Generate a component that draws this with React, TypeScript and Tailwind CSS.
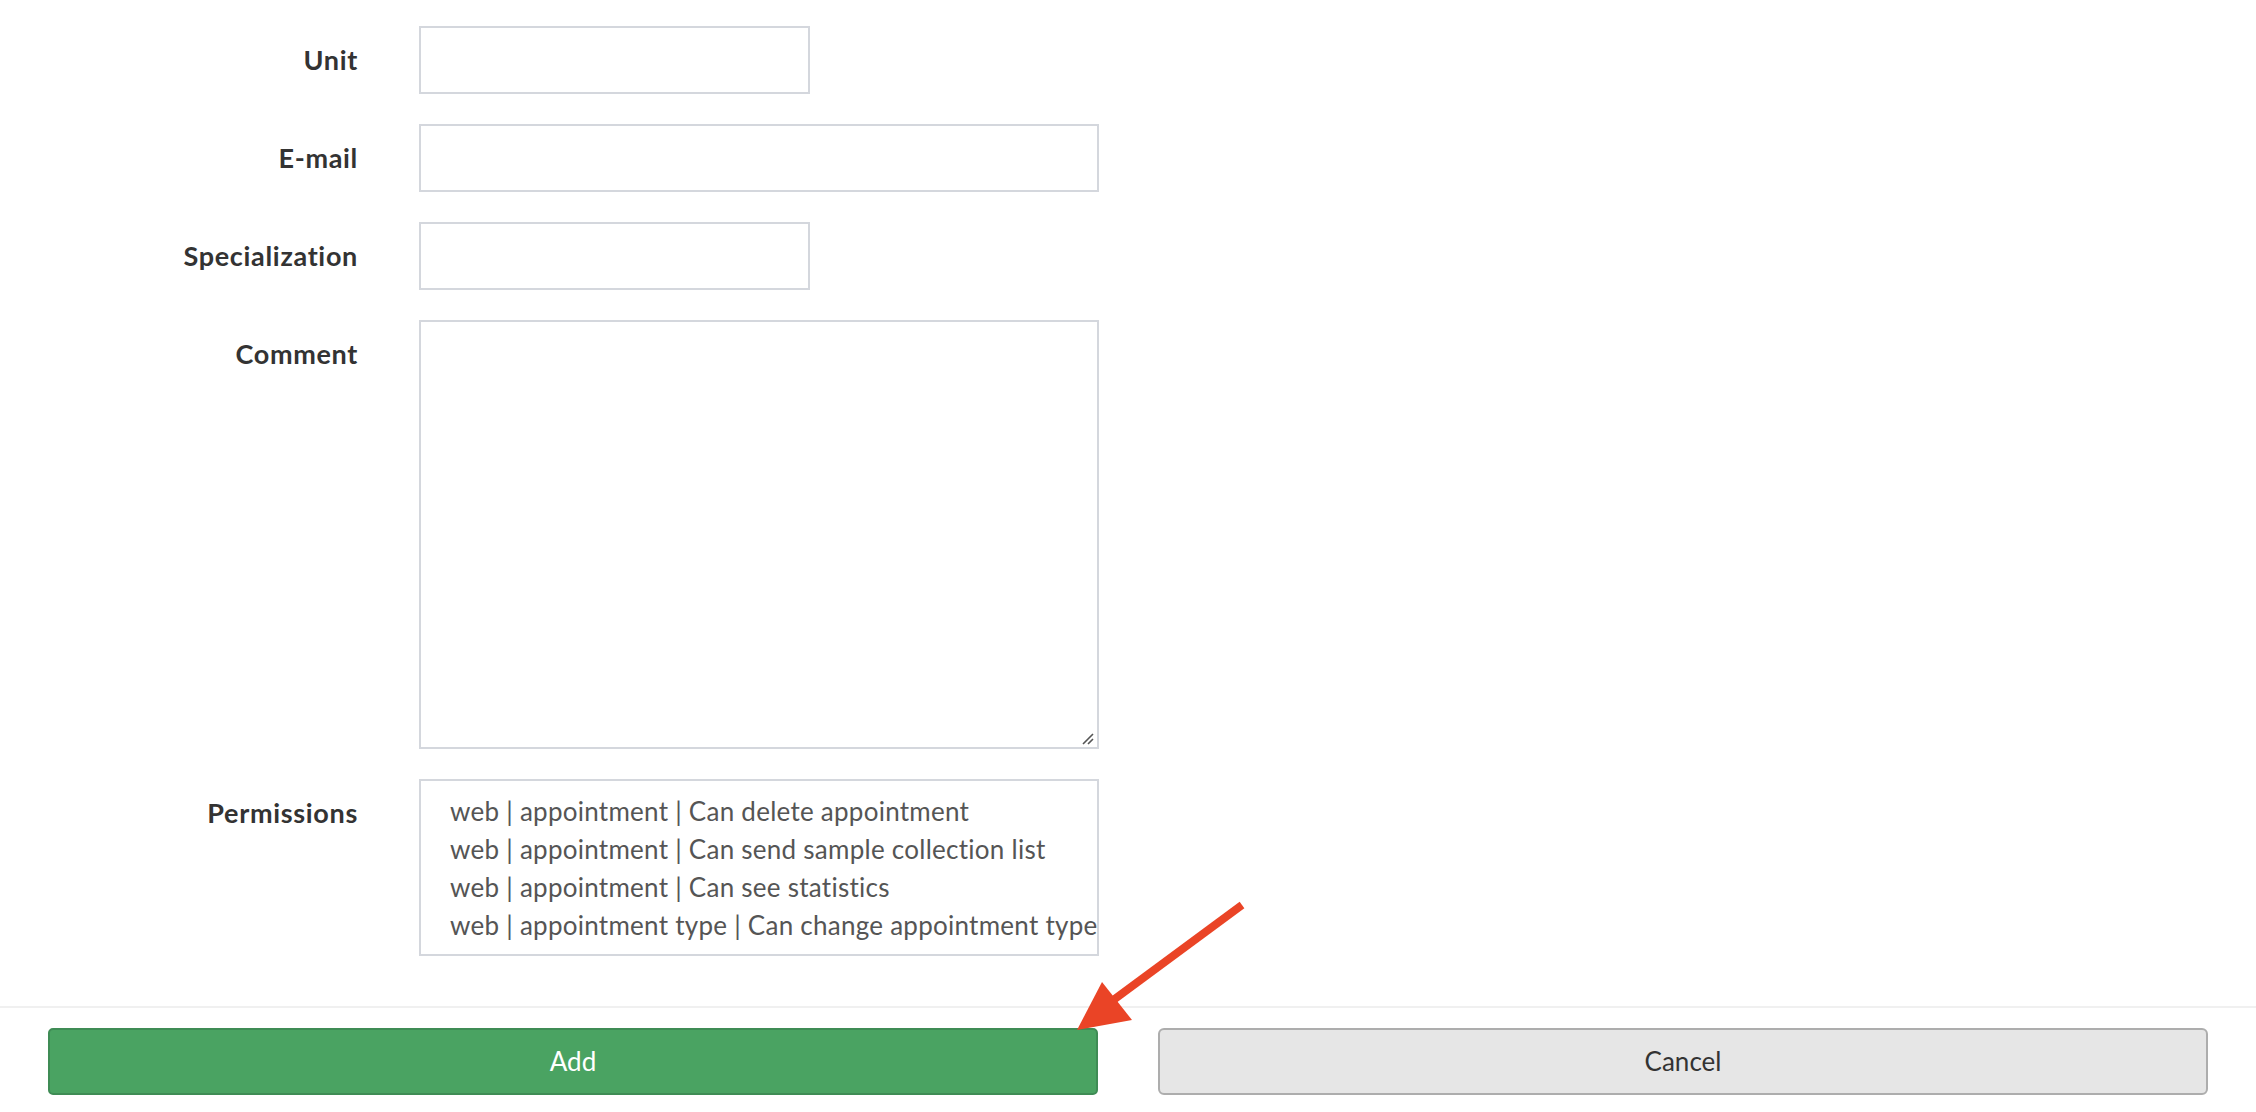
const permissions = [
  "web | appointment | Can delete appointment",
  "web | appointment | Can send sample collection list",
  "web | appointment | Can see statistics",
  "web | appointment type | Can change appointment type",
];

const Label = ({ text }: { text: string }) => (
  <div className="w-[358px] h-[68px] shrink-0 flex items-center justify-end text-[27px] tracking-[0.025em] font-bold text-[#333333]">
    {text}
  </div>
);

const App = () => {
  return (
    <div className="relative w-full h-[1112px] bg-white overflow-hidden font-['Lato',sans-serif]">
      <div className="flex flex-col gap-[30px] pt-[26px]">
        <div className="flex gap-[61px]">
          <Label text="Unit" />
          <div className="w-[391px] h-[68px] border-2 border-[#d4d7dd] bg-white" />
        </div>
        <div className="flex gap-[61px]">
          <Label text="E-mail" />
          <div className="w-[680px] h-[68px] border-2 border-[#d4d7dd] bg-white" />
        </div>
        <div className="flex gap-[61px]">
          <Label text="Specialization" />
          <div className="w-[391px] h-[68px] border-2 border-[#d4d7dd] bg-white" />
        </div>
        <div className="flex gap-[61px]">
          <Label text="Comment" />
          <div className="relative w-[680px] h-[429px] border-2 border-[#d4d7dd] bg-white">
            <svg
              className="absolute right-[2px] bottom-[2px]"
              width="14"
              height="14"
              viewBox="0 0 14 14"
            >
              <path d="M2 13 L12 3 M7 13 L12 8" stroke="#555" strokeWidth="1.6" />
            </svg>
          </div>
        </div>
        <div className="flex gap-[61px]">
          <Label text="Permissions" />
          <div className="w-[680px] h-[177px] border-2 border-[#d4d7dd] bg-white overflow-hidden pl-[29px] pt-[11px]">
            {permissions.map((p) => (
              <div
                key={p}
                className="h-[38px] leading-[38px] text-[26px] text-[#555555] whitespace-nowrap tracking-[0.01em]"
              >
                {p}
              </div>
            ))}
          </div>
        </div>
      </div>

      <div className="absolute left-0 right-0 top-[1006px] border-t-2 border-[#f0f0f0]" />
      <div className="absolute left-0 right-0 top-[1028px] px-[48px] grid grid-cols-2 gap-[60px]">
        <button className="h-[67px] rounded-[5px] bg-[#4aa362] border-2 border-[#3f8c55] text-white text-[26px]">
          Add
        </button>
        <button className="h-[67px] rounded-[6px] bg-[#e6e6e6] border-2 border-[#adadad] text-[#333333] text-[26px]">
          Cancel
        </button>
      </div>

      <svg
        className="absolute left-0 top-0 pointer-events-none"
        width="2256"
        height="1112"
      >
        <line x1="1242" y1="905" x2="1112" y2="1001" stroke="#ea4426" strokeWidth="8" />
        <polygon points="1077,1030 1102,982 1132,1020" fill="#ea4426" />
      </svg>
    </div>
  );
};

export default App;
